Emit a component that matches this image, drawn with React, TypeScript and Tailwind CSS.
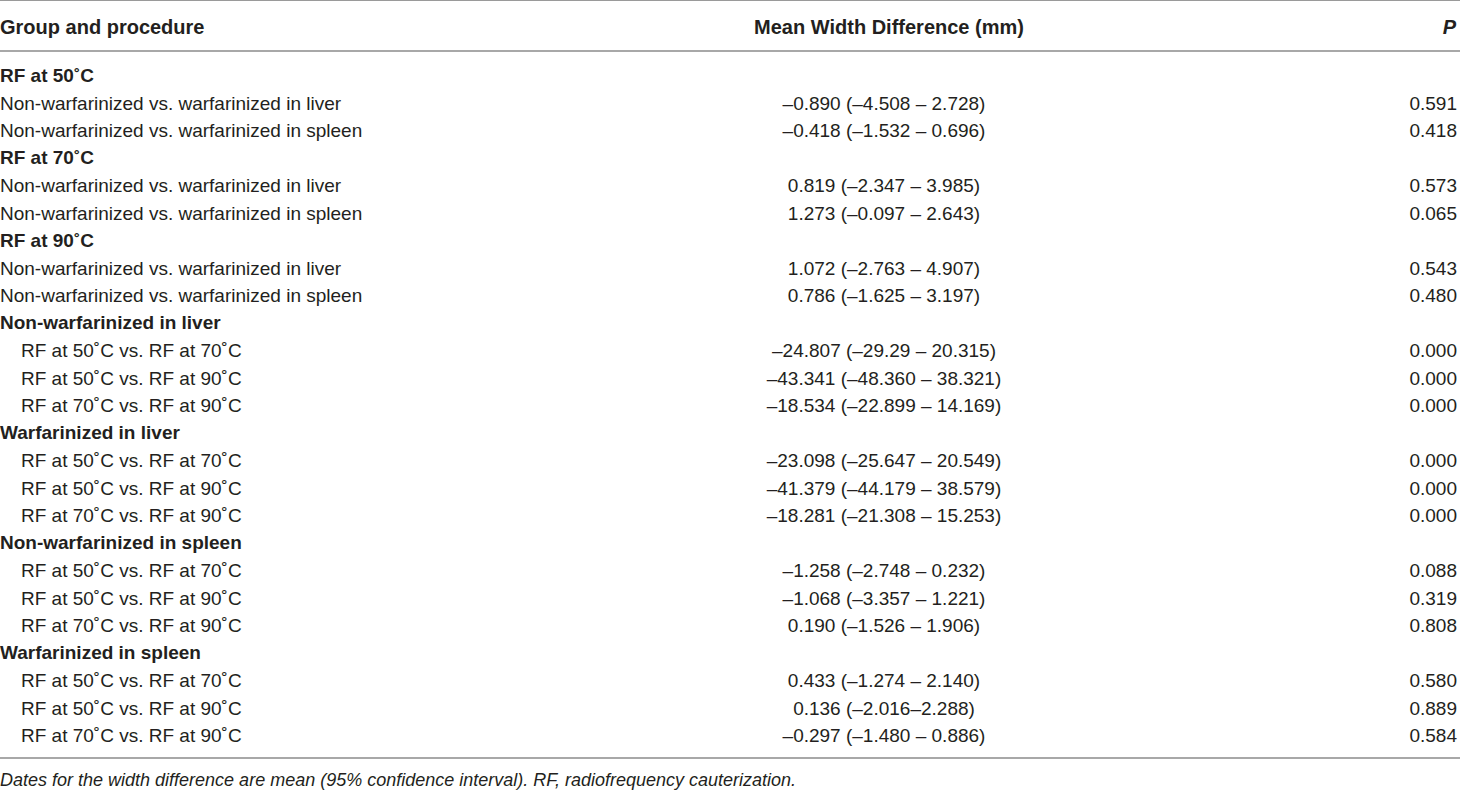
import React from 'react';

type Row =
  | { kind: 'group'; label: string }
  | { kind: 'item'; label: string; mean: string; p: string; indent?: boolean };

const rows: Row[] = [
  { kind: 'group', label: 'RF at 50˚C' },
  { kind: 'item', label: 'Non-warfarinized vs. warfarinized in liver', mean: '–0.890 (–4.508 – 2.728)', p: '0.591' },
  { kind: 'item', label: 'Non-warfarinized vs. warfarinized in spleen', mean: '–0.418 (–1.532 – 0.696)', p: '0.418' },
  { kind: 'group', label: 'RF at 70˚C' },
  { kind: 'item', label: 'Non-warfarinized vs. warfarinized in liver', mean: '0.819 (–2.347 – 3.985)', p: '0.573' },
  { kind: 'item', label: 'Non-warfarinized vs. warfarinized in spleen', mean: '1.273 (–0.097 – 2.643)', p: '0.065' },
  { kind: 'group', label: 'RF at 90˚C' },
  { kind: 'item', label: 'Non-warfarinized vs. warfarinized in liver', mean: '1.072 (–2.763 – 4.907)', p: '0.543' },
  { kind: 'item', label: 'Non-warfarinized vs. warfarinized in spleen', mean: '0.786 (–1.625 – 3.197)', p: '0.480' },
  { kind: 'group', label: 'Non-warfarinized in liver' },
  { kind: 'item', indent: true, label: 'RF at 50˚C vs. RF at 70˚C', mean: '–24.807 (–29.29 – 20.315)', p: '0.000' },
  { kind: 'item', indent: true, label: 'RF at 50˚C vs. RF at 90˚C', mean: '–43.341 (–48.360 – 38.321)', p: '0.000' },
  { kind: 'item', indent: true, label: 'RF at 70˚C vs. RF at 90˚C', mean: '–18.534 (–22.899 – 14.169)', p: '0.000' },
  { kind: 'group', label: 'Warfarinized in liver' },
  { kind: 'item', indent: true, label: 'RF at 50˚C vs. RF at 70˚C', mean: '–23.098 (–25.647 – 20.549)', p: '0.000' },
  { kind: 'item', indent: true, label: 'RF at 50˚C vs. RF at 90˚C', mean: '–41.379 (–44.179 – 38.579)', p: '0.000' },
  { kind: 'item', indent: true, label: 'RF at 70˚C vs. RF at 90˚C', mean: '–18.281 (–21.308 – 15.253)', p: '0.000' },
  { kind: 'group', label: 'Non-warfarinized in spleen' },
  { kind: 'item', indent: true, label: 'RF at 50˚C vs. RF at 70˚C', mean: '–1.258 (–2.748 – 0.232)', p: '0.088' },
  { kind: 'item', indent: true, label: 'RF at 50˚C vs. RF at 90˚C', mean: '–1.068 (–3.357 – 1.221)', p: '0.319' },
  { kind: 'item', indent: true, label: 'RF at 70˚C vs. RF at 90˚C', mean: '0.190 (–1.526 – 1.906)', p: '0.808' },
  { kind: 'group', label: 'Warfarinized in spleen' },
  { kind: 'item', indent: true, label: 'RF at 50˚C vs. RF at 70˚C', mean: '0.433 (–1.274 – 2.140)', p: '0.580' },
  { kind: 'item', indent: true, label: 'RF at 50˚C vs. RF at 90˚C', mean: '0.136 (–2.016–2.288)', p: '0.889' },
  { kind: 'item', indent: true, label: 'RF at 70˚C vs. RF at 90˚C', mean: '–0.297 (–1.480 – 0.886)', p: '0.584' },
];

export default function App() {
  return (
    <div className="w-[1460px] h-[790px] bg-white text-[#231f20] font-['Liberation_Sans',Arial,sans-serif] text-[19px] overflow-hidden">
      <div className="border-t border-[#9a9a9a]" />
      {/* Header */}
      <div className="grid grid-cols-[620px_528px_1fr] h-[51px] pt-[3px] items-center font-bold text-[20px] border-b-2 border-[#a8a8a8]">
        <div>Group and procedure</div>
        <div className="text-center pl-[10px]">Mean Width Difference (mm)</div>
        <div className="text-right pr-[4px] italic">P</div>
      </div>

      <div className="pt-[10px] pb-[7px]">
        {rows.map((r, i) =>
          r.kind === 'group' ? (
            <div key={i} className="h-[27.5px] flex items-center font-bold">
              {r.label}
            </div>
          ) : (
            <div key={i} className="grid grid-cols-[620px_528px_1fr] h-[27.5px] items-center">
              <div className={r.indent ? 'pl-[21px]' : ''}>{r.label}</div>
              <div className="text-center">{r.mean}</div>
              <div className="text-right pr-[3px]">{r.p}</div>
            </div>
          )
        )}
      </div>

      <div className="border-t-2 border-[#a8a8a8]" />
      <p className="italic text-[18px] mt-[12px] leading-[18px]">
        Dates for the width difference are mean (95% confidence interval). RF, radiofrequency cauterization.
      </p>
    </div>
  );
}
